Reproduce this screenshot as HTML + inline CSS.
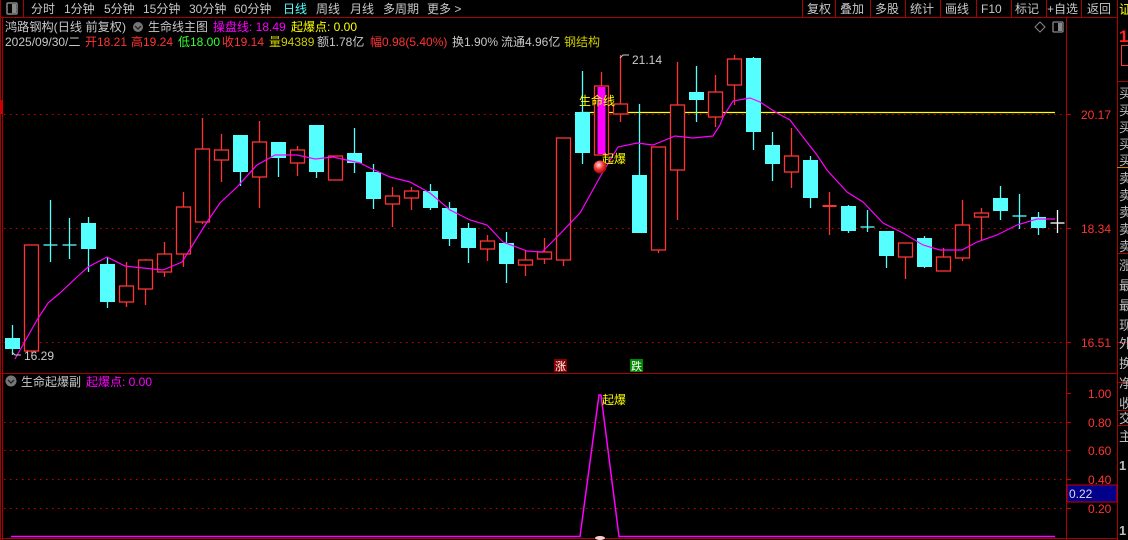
<!DOCTYPE html>
<html><head><meta charset="utf-8"><style>
body{margin:0;background:#000;width:1128px;height:540px;overflow:hidden;font-family:"Liberation Sans","Noto Sans CJK SC",sans-serif}
svg{display:block}
text{font-family:"Liberation Sans","Noto Sans CJK SC",sans-serif}
</style></head><body>
<svg width="1128" height="540" viewBox="0 0 1128 540" xmlns="http://www.w3.org/2000/svg">
<rect width="1128" height="540" fill="#000"/>
<!-- toolbar -->
<line x1="0" y1="17.5" x2="1117" y2="17.5" stroke="#a00" />
<line x1="0.5" y1="0" x2="0.5" y2="540" stroke="#a00"/>
<line x1="23.5" y1="0" x2="23.5" y2="17" stroke="#a00"/>
<rect x="7" y="3" width="10" height="11" rx="1" fill="none" stroke="#888" stroke-width="1.5"/><rect x="12" y="4" width="4" height="9" fill="#888"/>
<g font-size="12" fill="#c8c8c8">
<text x="31" y="13">分时</text><text x="64" y="13">1分钟</text><text x="104" y="13">5分钟</text><text x="143" y="13">15分钟</text><text x="189" y="13">30分钟</text><text x="234" y="13">60分钟</text>
<text x="283" y="13" fill="#5ff">日线</text><text x="316" y="13">周线</text><text x="350" y="13">月线</text><text x="383" y="13">多周期</text><text x="427" y="13">更多 &gt;</text>
<text x="807" y="13">复权</text><text x="840" y="13">叠加</text><text x="875" y="13">多股</text><text x="910" y="13">统计</text><text x="945" y="13">画线</text><text x="981" y="13">F10</text><text x="1015" y="13">标记</text><text x="1047" y="13">+自选</text><text x="1087" y="13">返回</text>
</g>
<g stroke="#a00"><line x1="802.5" y1="0" x2="802.5" y2="17"/><line x1="835.5" y1="0" x2="835.5" y2="17"/><line x1="870.5" y1="0" x2="870.5" y2="17"/><line x1="905.5" y1="0" x2="905.5" y2="17"/><line x1="940.5" y1="0" x2="940.5" y2="17"/><line x1="976.5" y1="0" x2="976.5" y2="17"/><line x1="1011.5" y1="0" x2="1011.5" y2="17"/><line x1="1046.5" y1="0" x2="1046.5" y2="17"/><line x1="1081.5" y1="0" x2="1081.5" y2="17"/><line x1="1117.5" y1="0" x2="1117.5" y2="540"/><line x1="1066.5" y1="17" x2="1066.5" y2="540"/></g>
<!-- title lines -->
<g font-size="12">
<text x="5" y="31" fill="#c8c8c8" textLength="121" lengthAdjust="spacingAndGlyphs">鸿路钢构(日线 前复权)</text>
<circle cx="138" cy="27" r="5" fill="#777"/><path d="M135 26l3 3 3-3" stroke="#222" fill="none" stroke-width="1.3"/>
<text x="148" y="31" fill="#c8c8c8">生命线主图</text>
<text x="213" y="31" fill="#f0f">操盘线: 18.49</text>
<text x="291" y="31" fill="#ff0">起爆点: 0.00</text>
<text x="5" y="46" fill="#c8c8c8">2025/09/30/二</text>
<text x="85" y="46" fill="#f33">开18.21</text><text x="131" y="46" fill="#f33">高19.24</text><text x="178" y="46" fill="#3f3">低18.00</text><text x="222" y="46" fill="#f33">收19.14</text>
<text x="269" y="46" fill="#cc0">量94389</text><text x="317" y="46" fill="#c8c8c8">额1.78亿</text><text x="370" y="46" fill="#f33">幅0.98(5.40%)</text>
<text x="452" y="46" fill="#c8c8c8">换1.90%</text><text x="501" y="46" fill="#c8c8c8">流通4.96亿</text><text x="564" y="46" fill="#cc0">钢结构</text>
</g>
<path d="M1040 22l5 5-5 5-5-5z" fill="none" stroke="#888"/>
<rect x="1053" y="22" width="10" height="10" rx="1" fill="none" stroke="#888" stroke-width="1.3"/><rect x="1058" y="23" width="4" height="8" fill="#888"/>
<!-- grid main -->
<g stroke="#c00" stroke-dasharray="1.5 4.5"><line x1="4" y1="114.5" x2="1066" y2="114.5"/><line x1="4" y1="228.5" x2="1066" y2="228.5"/><line x1="4" y1="342.5" x2="1066" y2="342.5"/>
<line x1="4" y1="422.5" x2="1066" y2="422.5"/><line x1="4" y1="450.5" x2="1066" y2="450.5"/><line x1="4" y1="479.5" x2="1066" y2="479.5"/><line x1="4" y1="508.5" x2="1066" y2="508.5"/></g>
<line x1="2.5" y1="17" x2="2.5" y2="540" stroke="#a00"/>
<rect x="0" y="100" width="3" height="14" fill="#c00"/>
<line x1="0" y1="373.5" x2="1117" y2="373.5" stroke="#a00"/>
<line x1="0" y1="538.5" x2="1117" y2="538.5" stroke="#a00"/>
<!-- axis labels -->
<g font-size="12" fill="#f33">
<text x="1081" y="119">20.17</text><text x="1081" y="233">18.34</text><text x="1081" y="347">16.51</text>
<text x="1088" y="398">1.00</text><text x="1088" y="427">0.80</text><text x="1088" y="455">0.60</text><text x="1088" y="484">0.40</text><text x="1088" y="513">0.20</text>
</g>
<g stroke="#c00"><line x1="1066" y1="114.5" x2="1071" y2="114.5"/><line x1="1066" y1="228.5" x2="1071" y2="228.5"/><line x1="1066" y1="342.5" x2="1071" y2="342.5"/><line x1="1066" y1="393.5" x2="1071" y2="393.5"/><line x1="1066" y1="422.5" x2="1071" y2="422.5"/><line x1="1066" y1="450.5" x2="1071" y2="450.5"/><line x1="1066" y1="479.5" x2="1071" y2="479.5"/><line x1="1066" y1="508.5" x2="1071" y2="508.5"/></g>
<rect x="1067" y="485" width="50" height="17" fill="#00008a" stroke="#c00"/>
<text x="1069" y="498" font-size="12" fill="#ddd">0.22</text>
<!-- sidebar -->
<g stroke="#a00"><line x1="1117" y1="81.5" x2="1128" y2="81.5"/><line x1="1117" y1="253.5" x2="1128" y2="253.5"/><line x1="1117" y1="342.5" x2="1128" y2="342.5"/><line x1="1117" y1="382.5" x2="1128" y2="382.5"/><line x1="1117" y1="410.5" x2="1128" y2="410.5"/><line x1="1117" y1="425.5" x2="1128" y2="425.5"/></g>
<line x1="1117" y1="167.5" x2="1128" y2="167.5" stroke="#c80"/>
<rect x="1121.5" y="45.5" width="10" height="20" fill="none" stroke="#f33"/>
<g font-size="13" fill="#bbb">
<text x="1119" y="14" fill="#ff0">证</text><text x="1119" y="42" fill="#f22" font-weight="bold" font-size="17">1</text>
<text x="1119" y="98">买</text><text x="1119" y="115">买</text><text x="1119" y="132">买</text><text x="1119" y="149">买</text><text x="1119" y="165">买</text>
<text x="1119" y="183">卖</text><text x="1119" y="200">卖</text><text x="1119" y="217">卖</text><text x="1119" y="234">卖</text><text x="1119" y="251">卖</text>
<text x="1119" y="270">涨</text><text x="1119" y="290">最</text><text x="1119" y="310">最</text><text x="1119" y="330">现</text><text x="1119" y="348">外</text>
<text x="1119" y="368">换</text><text x="1119" y="388">净</text><text x="1119" y="408">收</text><text x="1119" y="423">交</text><text x="1119" y="441">主</text>
<text x="1119" y="470" font-weight="bold">1</text><text x="1119" y="535" font-weight="bold">1</text>
</g>
<!-- yellow life line -->
<line x1="580" y1="112.5" x2="1055" y2="112.5" stroke="#ff0" stroke-width="1.3"/>
<!-- candles -->
<g id="c" stroke-width="1.3"></g>
<!-- MA -->
<polyline fill="none" stroke="#f0f" stroke-width="1.2" points="15,359 37,320 48,303 60,293 77,277 88,267 107,257 125,266 143,268 163,270 182,262 207,222 220,203 237,187 257,165 275,155 297,155 315,159 333,157 360,163 370,168 390,177 410,182 430,193 450,210 470,220 487,225 503,242 527,251 542,252 557,237 580,213 600,177 618,147 637,143 653,145 675,136 693,138 713,136 720,125 723,117 733,101 750,98 760,102 777,113 790,120 803,137 817,155 827,170 847,192 863,202 883,223 903,233 923,245 940,250 962,250 977,242 997,235 1017,225 1037,219 1055,219"/>
<g font-size="12">
<text x="579" y="105" fill="#ff0">生命线</text>
<text x="602" y="163" fill="#ff0">起爆</text>
<text x="632" y="64" fill="#ccc">21.14</text><path d="M620 58l3-3h6" stroke="#ccc" fill="none"/>
<text x="24" y="360" fill="#ccc">16.29</text><path d="M12 352l3 3h6" stroke="#ccc" fill="none"/>
</g>
<defs><radialGradient id="g" cx="0.4" cy="0.35" r="0.7"><stop offset="0" stop-color="#fdd"/><stop offset="0.5" stop-color="#e33"/><stop offset="1" stop-color="#900"/></radialGradient></defs>
<circle cx="600" cy="167" r="6.5" fill="url(#g)"/>
<rect x="554" y="359" width="13" height="13" fill="#800"/><text x="555" y="370" font-size="11" fill="#fff">涨</text>
<rect x="630" y="359" width="13" height="13" fill="#080"/><text x="631" y="370" font-size="11" fill="#fff">跌</text>
<!-- sub -->
<circle cx="11" cy="381" r="5.5" fill="#777"/><path d="M8 380l3 3 3-3" stroke="#222" fill="none" stroke-width="1.3"/>
<text x="21" y="386" font-size="12" fill="#c8c8c8">生命起爆副</text>
<text x="86" y="386" font-size="12" fill="#f0f">起爆点: 0.00</text>
<polyline fill="none" stroke="#f0f" stroke-width="1.5" points="11,536.5 580,536.5 599,395 601,395 619,536.5 1055,536.5"/>
<text x="602" y="404" font-size="12" fill="#ff0">起爆</text>
<ellipse cx="600" cy="538" rx="5" ry="2" fill="#fcc"/>
</svg>
<script>
var d=[
['c',338,349,325,355],['r',245,351,245,353],['x',245,245,200,262,'c'],['x',245,245,218,259,'c'],['c',223,249,217,272],
['c',264,302,257,308],['r',286,302,262,307],['r',260,289,259,305],['r',254,272,242,277],['r',207,254,192,267],
['r',149,222,118,224],['r',150,160,134,182],['c',135,172,135,186],['r',142,177,121,208],['c',142,158,142,177],
['r',150,163,146,176],['c',125,172,128,178],['r',156,180,156,180],['c',153,163,128,173],['c',172,199,164,209],
['r',196,204,187,227],['r',191,198,187,210],['c',191,208,184,210],['c',208,239,202,246],['c',228,248,223,263],
['r',241,249,235,261],['c',243,264,232,283],['r',260,265,250,276],['r',252,259,238,264],['r',138,260,138,266],
['c',112,153,71,164],['m',86,155,72,155],['r',104,114,55,122],['c',175,233,104,233],['r',147,250,147,253],
['r',105,170,62,220],['c',92,100,66,122],['r',92,117,75,127],['r',59,85,55,105],['c',58,132,57,150],
['c',145,164,132,181],['r',156,172,128,188],['c',160,198,156,208],['x',206,206,192,235,'r'],['c',206,231,205,233],
['x',227,227,210,232,'c'],['c',231,256,231,268],['r',243,257,243,279],['c',238,267,236,268],['r',257,271,248,271],
['r',225,258,200,261],['r',213,217,208,240],['c',198,211,186,220],['x',216,216,194,229,'c'],['c',217,228,212,235],['x',223,223,210,233,'w']];
var s='',col={c:'#55ffff',r:'#ff3333',w:'#ffffff'};
d.forEach(function(a,i){var cx=Math.round(11.5+19*i)+0.5,t=a[0];
if(t=='x'){var k=col[a[5]];s+='<line x1="'+cx+'" y1="'+a[3]+'" x2="'+cx+'" y2="'+a[4]+'" stroke="'+k+'"/><line x1="'+(cx-7)+'" y1="'+a[1]+'" x2="'+(cx+7)+'" y2="'+a[1]+'" stroke="'+k+'" stroke-width="'+(a[5]=='r'?2:1.3)+'"/>';return;}
var k=t=='c'?col.c:col.r;
s+='<line x1="'+cx+'" y1="'+a[3]+'" x2="'+cx+'" y2="'+a[4]+'" stroke="'+k+'"/>';
if(t=='c')s+='<rect x="'+(cx-7.5)+'" y="'+a[1]+'" width="15" height="'+Math.max(1,a[2]-a[1])+'" fill="'+k+'"/>';
else{s+='<rect x="'+(cx-7)+'" y="'+a[1]+'" width="14" height="'+(a[2]-a[1])+'" fill="#000" stroke="'+k+'"/>';
if(t=='m')s+='<rect x="'+(cx-4)+'" y="'+(a[1]+1)+'" width="8" height="'+(a[2]-a[1]-2)+'" fill="#f0f"/>';}
});
document.getElementById('c').innerHTML=s;
</script>
</body></html>
